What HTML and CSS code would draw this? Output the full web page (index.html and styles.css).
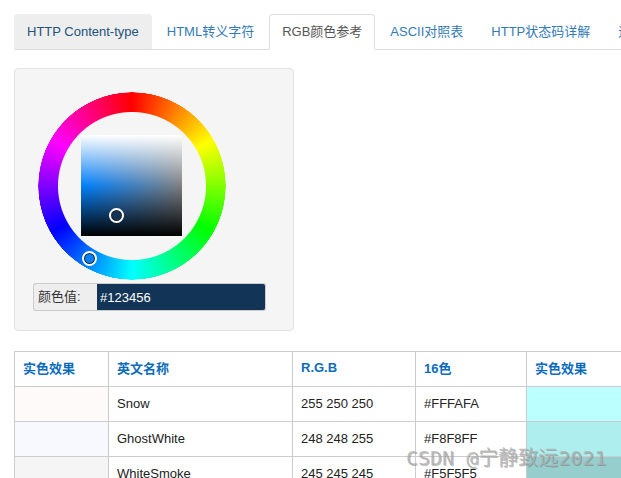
FILE: index.html
```html
<!DOCTYPE html>
<html lang="zh-CN">
<head>
    <meta charset="UTF-8">
    <meta name="viewport" content="width=device-width, initial-scale=1.0">
    <title>RGB颜色参考</title>
    <link rel="stylesheet" href="styles.css">
</head>
<body>
    <div class="wrapper">
        <ul class="tabs">
            <li class="tab tab-hover"><a href="#">HTTP Content-type</a></li>
            <li class="tab"><a href="#">HTML转义字符</a></li>
            <li class="tab tab-active"><a href="#">RGB颜色参考</a></li>
            <li class="tab"><a href="#">ASCII对照表</a></li>
            <li class="tab"><a href="#">HTTP状态码详解</a></li>
            <li class="tab"><a href="#">运算符优先级</a></li>
        </ul>

        <div class="well">
            <div class="wheel">
                <div class="ring"></div>
                <div class="square"></div>
                <span class="handle handle-square"></span>
                <span class="handle handle-ring"></span>
            </div>
            <div class="input-group">
                <span class="input-label">颜色值:</span>
                <input class="input-value" type="text" value="#123456">
            </div>
        </div>

        <table class="colors">
            <thead>
                <tr>
                    <th class="col-swatch">实色效果</th>
                    <th class="col-name">英文名称</th>
                    <th class="col-rgb">R.G.B</th>
                    <th class="col-hex">16色</th>
                    <th class="col-swatch2">实色效果</th>
                </tr>
            </thead>
            <tbody>
                <tr>
                    <td class="c-snow"></td>
                    <td>Snow</td>
                    <td>255 250 250</td>
                    <td>#FFFAFA</td>
                    <td class="c-pale1"></td>
                </tr>
                <tr>
                    <td class="c-ghost"></td>
                    <td>GhostWhite</td>
                    <td>248 248 255</td>
                    <td>#F8F8FF</td>
                    <td class="c-pale2"></td>
                </tr>
                <tr>
                    <td class="c-smoke"></td>
                    <td>WhiteSmoke</td>
                    <td>245 245 245</td>
                    <td>#F5F5F5</td>
                    <td class="c-pale3"></td>
                </tr>
            </tbody>
        </table>
    </div>
    <div class="watermark">CSDN @宁静致远2021</div>
</body>
</html>
```

FILE: styles.css
```css
html, body {
    height: 100%;
}

body {
    margin: 0;
    font-family: "Liberation Sans", "Noto Sans CJK SC", sans-serif;
    font-size: 13px;
    color: #333;
    overflow: hidden;
    position: relative;
}

.wrapper {
    padding: 14px 0 0 14px;
    width: 800px;
}

.tabs {
    display: flex;
    margin: 0 0 18px;
    padding: 0;
    list-style: none;
    border-bottom: 1px solid #ddd;
    height: 35px;
    white-space: nowrap;
}

.tab {
    height: 36px;
    box-sizing: border-box;
    border: 1px solid transparent;
    border-radius: 4px 4px 0 0;
    margin-right: 2px;
    padding: 0 12px;
    line-height: 33px;
}

.tab a {
    color: #337ab7;
    text-decoration: none;
}

.tab-hover {
    background: #eee;
    border-color: #eee;
    border-bottom-color: #ddd;
}

.tab-hover a {
    color: #23527c;
}

.tab-active {
    background: #fff;
    border-color: #ddd;
    border-bottom-color: #fff;
}

.tab-active a {
    color: #555;
}

.well {
    box-sizing: border-box;
    width: 280px;
    height: 263px;
    margin-bottom: 20px;
    padding: 23px 0 0 18px;
    background: #f5f5f5;
    border: 1px solid #e3e3e3;
    border-radius: 4px;
}

.wheel {
    position: relative;
    width: 188px;
    height: 188px;
    margin-left: 5px;
}

.ring {
    width: 100%;
    height: 100%;
    border-radius: 50%;
    background: conic-gradient(#f00, #ff0, #0f0, #0ff, #00f, #f0f, #f00);
    -webkit-mask: radial-gradient(circle closest-side, transparent 73.5px, #000 74.5px, #000 93.5px, transparent 94px);
    mask: radial-gradient(circle closest-side, transparent 73.5px, #000 74.5px, #000 93.5px, transparent 94px);
}

.square {
    position: absolute;
    left: 43px;
    top: 43px;
    width: 101px;
    height: 101px;
    background:
        linear-gradient(to bottom, #fff, rgba(255, 255, 255, 0) 50%, rgba(0, 0, 0, 0) 50%, #000),
        linear-gradient(to right, #0080ff, #808080);
}

.handle {
    position: absolute;
    box-sizing: border-box;
    border-radius: 50%;
    border: 2px solid #fff;
    box-shadow: 0 0 0 1px #222 inset;
}

.handle-square {
    left: 71px;
    top: 116px;
    width: 15px;
    height: 15px;
    background: #123456;
}

.handle-ring {
    left: 44px;
    top: 159px;
    width: 15px;
    height: 15px;
    background: #0080ff;
}

.input-group {
    display: flex;
    width: 233px;
    height: 28px;
    margin-top: 3px;
}

.input-label {
    box-sizing: border-box;
    width: 64px;
    line-height: 26px;
    padding-left: 4px;
    background: #eee;
    border: 1px solid #ccc;
    border-right: 0;
    border-radius: 3px 0 0 3px;
    color: #333;
}

.input-value {
    box-sizing: border-box;
    width: 169px;
    height: 28px;
    padding: 0 3px;
    font: inherit;
    color: #fff;
    background: #123456;
    border: 1px solid #ccc;
    border-left: 0;
    border-radius: 0 3px 3px 0;
    outline: none;
}

.colors {
    table-layout: fixed;
    border-collapse: collapse;
    width: 700px;
}

.colors th,
.colors td {
    border: 1px solid #ccc;
    height: 34px;
    padding: 0 8px;
    text-align: left;
    color: #222;
}

.colors th {
    color: #0b6cbc;
    height: 31px;
    padding-bottom: 3px;
}

.colors td {
    padding-bottom: 1px;
    height: 33px;
}

.col-swatch { width: 77px; }
.col-name { width: 167px; }
.col-rgb { width: 106px; }
.col-hex { width: 94px; }

.c-snow { background: #fffafa; }
.c-ghost { background: #f8f8ff; }
.c-smoke { background: #f5f5f5; }
.c-pale1 { background: #bbffff; }
.c-pale2 { background: #aeeeee; }
.c-pale3 { background: #96cdcd; }

.watermark {
    position: absolute;
    left: 406px;
    top: 442px;
    font-family: "DejaVu Sans Mono", "Noto Sans CJK SC", monospace;
    font-size: 20px;
    color: rgba(175, 175, 175, 0.8);
    text-shadow: 1px 1px 0 rgba(90, 90, 90, 0.4);
    white-space: nowrap;
}
```
